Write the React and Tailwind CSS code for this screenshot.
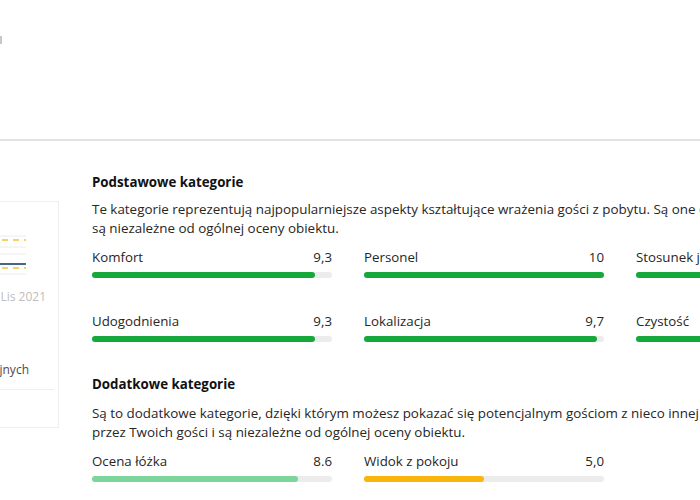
import React from "react";

const font = { fontFamily: '"Open Sans", "Noto Sans", sans-serif' };

function Bar({ label, value, pct, color }) {
  return (
    <div className="flex flex-col">
      <div className="flex justify-between text-[13.3px] leading-[20px] text-[#262626]">
        <span>{label}</span>
        <span>{value}</span>
      </div>
      <div className="mt-[5px] h-[6px] w-full rounded-[3px] bg-[#ececec]">
        <div className={`h-[6px] rounded-[3px] ${color}`} style={{ width: pct + "%" }} />
      </div>
    </div>
  );
}

export default function App() {
  return (
    <div className="relative h-[500px] w-[700px] overflow-hidden bg-white" style={font}>
      <div className="h-[139px] relative">
        <div className="absolute left-0 top-[36px] h-[8px] w-[2px] bg-[#c8c8c8]" />
      </div>
      <div className="h-[2px] bg-[#e3e3e3]" />
      <div className="flex">
        <div className="ml-[-201px] mt-[60px] w-[260px] shrink-0">
          <div className="h-[227px] border border-[#efefef] bg-white">
            <div className="flex justify-end pr-[32px] pt-[33px]">
              <svg width="200" height="40" viewBox="0 0 200 40">
                <line x1="0" y1="1" x2="200" y2="1" stroke="#ececec" strokeWidth="1" />
                <line x1="0" y1="5" x2="200" y2="5" stroke="#f3d36b" strokeWidth="2" strokeDasharray="6 5" />
                <line x1="0" y1="12" x2="200" y2="12" stroke="#ececec" strokeWidth="1" />
                <line x1="0" y1="19" x2="200" y2="19" stroke="#ececec" strokeWidth="1" />
                <line x1="0" y1="29" x2="200" y2="29" stroke="#45688a" strokeWidth="2" />
                <line x1="0" y1="33" x2="200" y2="33" stroke="#f3d36b" strokeWidth="2" strokeDasharray="6 5" />
                <line x1="0" y1="39" x2="200" y2="39" stroke="#ececec" strokeWidth="1" />
              </svg>
            </div>
            <div className="mt-[12px] whitespace-nowrap pr-[12px] text-right text-[12px] leading-[20px] text-[#bdbdbd]">
              Paź 2021 &nbsp;&nbsp;&nbsp;&nbsp;&nbsp;&nbsp;&nbsp;&nbsp; Lis 2021
            </div>
            <div className="mt-[54px] whitespace-nowrap pr-[29px] text-right text-[12px] leading-[18px] text-[#4a4a4a]">
              Porównaj z obiektami konkurencyjnych
            </div>
            <div className="mt-[10px] mr-[4px] h-px bg-[#efefef]" />
          </div>
        </div>
        <div className="ml-[33px] w-[784px] shrink-0 pt-[31px]">
          <div className="text-[13.3px] font-bold leading-[20px] text-[#111]">Podstawowe kategorie</div>
          <div className="mt-[8px] text-[13.4px] leading-[19px] text-[#262626]">
            Te kategorie reprezentują najpopularniejsze aspekty kształtujące wrażenia gości z pobytu. Są one oceniane przez gości i
            <br />
            są niezależne od ogólnej oceny obiektu.
          </div>
          <div className="mt-[9px] grid grid-cols-[240px_240px_240px] gap-x-[32px] gap-y-[33px]">
            <Bar label="Komfort" value="9,3" pct={93} color="bg-[#16a83a]" />
            <Bar label="Personel" value="10" pct={100} color="bg-[#16a83a]" />
            <Bar label="Stosunek jakości do ceny" value="9,5" pct={95} color="bg-[#16a83a]" />
            <Bar label="Udogodnienia" value="9,3" pct={93} color="bg-[#16a83a]" />
            <Bar label="Lokalizacja" value="9,7" pct={97} color="bg-[#16a83a]" />
            <Bar label="Czystość" value="9,8" pct={98} color="bg-[#16a83a]" />
          </div>
          <div className="mt-[32px] text-[13.3px] font-bold leading-[20px] text-[#111]">Dodatkowe kategorie</div>
          <div className="mt-[10px] text-[13.4px] leading-[19px] text-[#262626]">
            Są to dodatkowe kategorie, dzięki którym możesz pokazać się potencjalnym gościom z nieco innej strony. Są one oceniane
            <br />
            przez Twoich gości i są niezależne od ogólnej oceny obiektu.
          </div>
          <div className="mt-[9px] grid grid-cols-[240px_240px_240px] gap-x-[32px]">
            <Bar label="Ocena łóżka" value="8.6" pct={86} color="bg-[#7ed59c]" />
            <Bar label="Widok z pokoju" value="5,0" pct={50} color="bg-[#f9b50c]" />
          </div>
        </div>
      </div>
    </div>
  );
}
